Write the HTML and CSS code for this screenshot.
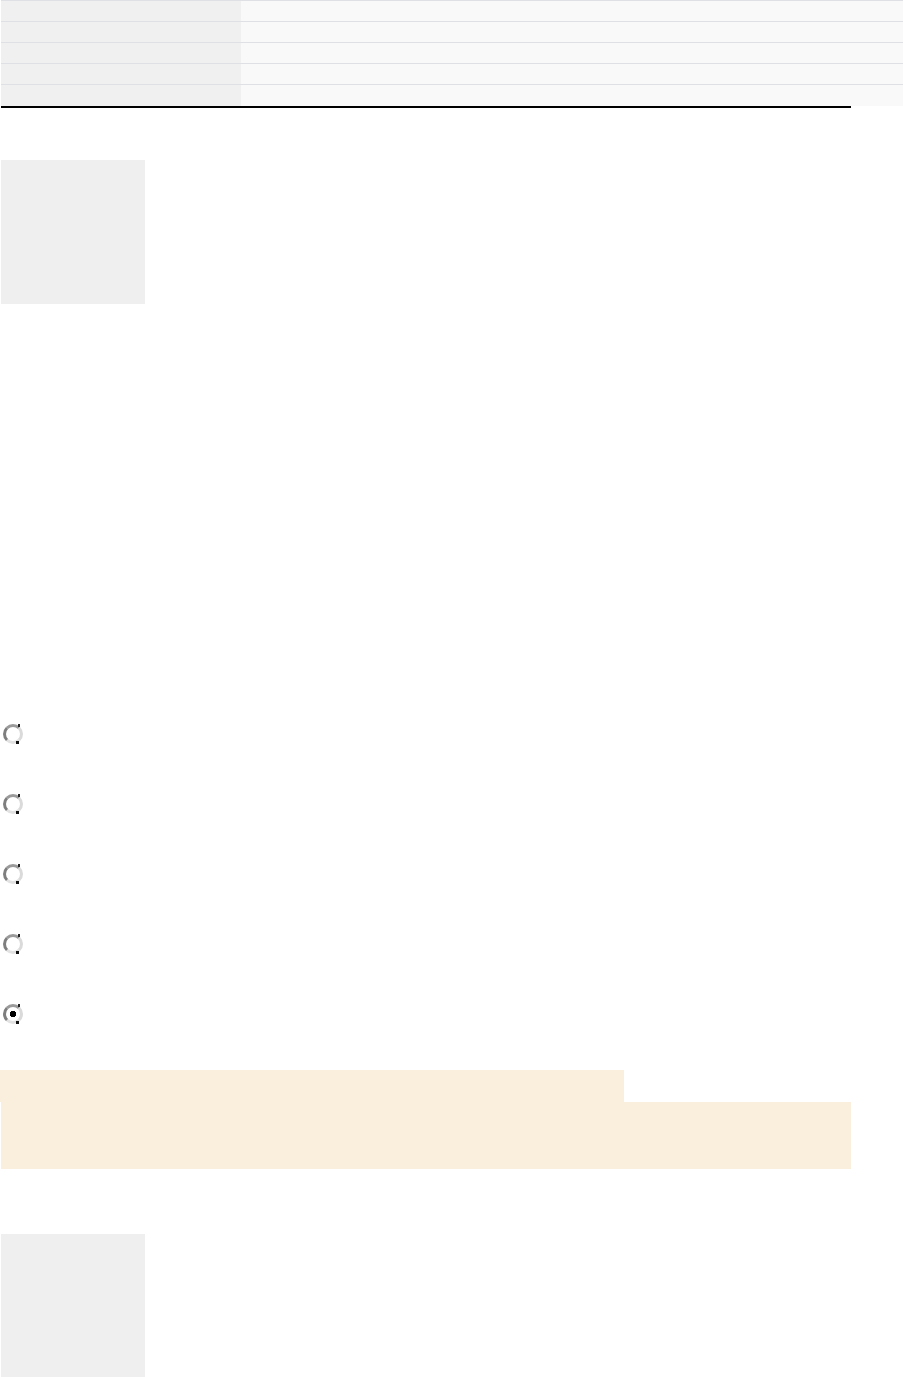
FILE: index.html
```html
<!DOCTYPE html>
<html lang="en">
  <head>
    <meta charset="UTF-8" />
    <meta name="viewport" content="width=device-width, initial-scale=1.0" />
    <title>Details</title>
    <link rel="stylesheet" href="styles.css">
  </head>
  <body>
    <div class="page">
      <table class="info">
        <tr><th></th><td></td></tr>
        <tr><th></th><td></td></tr>
        <tr><th></th><td></td></tr>
        <tr><th></th><td></td></tr>
        <tr><th></th><td></td></tr>
      </table>
      <div class="rule"></div>

      <div class="thumb"></div>

      <ul class="options">
        <li class="option"><span class="radio"></span></li>
        <li class="option"><span class="radio"></span></li>
        <li class="option"><span class="radio"></span></li>
        <li class="option"><span class="radio"></span></li>
        <li class="option"><span class="radio checked"></span></li>
      </ul>

      <div class="note">
        <div class="note-head"></div>
        <div class="note-body"></div>
      </div>

      <div class="thumb thumb-last"></div>
    </div>
  </body>
</html>
```

FILE: styles.css
```css
body {
  margin: 0;
  background-color: #fff;
  font-family: "Liberation Sans", Arial, sans-serif;
}
.page {
  margin-left: 1px;
  width: 850px;
}
.info {
  width: 902px;
  border-collapse: collapse;
}
.info tr {
  height: 21px;
}
.info th,
.info td {
  padding: 0;
  border-top: 1px solid #dfdfe6;
}
.info th {
  width: 240px;
  background-color: #f0f0f0;
}
.info td {
  background-color: #f9f9f9;
}
.rule {
  height: 2px;
  background-color: #000;
}
.thumb {
  width: 144px;
  height: 144px;
  margin-top: 52px;
  background-color: #efefef;
}
.thumb-last {
  margin-top: 65px;
}
.options {
  list-style: none;
  margin: 409px 0 0;
  padding: 0;
}
.option {
  height: 70px;
  padding-top: 11px;
  box-sizing: border-box;
}
.radio {
  position: relative;
  display: block;
  width: 14px;
  height: 14px;
  margin-left: 2px;
  border-radius: 50%;
  border: 3px solid;
  border-color: #9a9a9a #dadada #e2e2e2 #7e7e7e;
  background-color: #fff;
}
.radio::before {
  content: "";
  position: absolute;
  right: 0;
  top: -3px;
  width: 2px;
  height: 3px;
  background-color: #222;
}
.radio::after {
  content: "";
  position: absolute;
  right: 1px;
  bottom: -3px;
  width: 3px;
  height: 3px;
  background-color: #111;
}
.radio.checked {
  background-image: radial-gradient(circle at 50% 50%, #000 0 3px, #fff 3.5px);
}
.note {
  margin-top: 7px;
}
.note-head {
  width: 624px;
  height: 32px;
  margin-left: -1px;
  background-color: #faeedd;
}
.note-body {
  height: 67px;
  background-color: #faeedd;
}
```
